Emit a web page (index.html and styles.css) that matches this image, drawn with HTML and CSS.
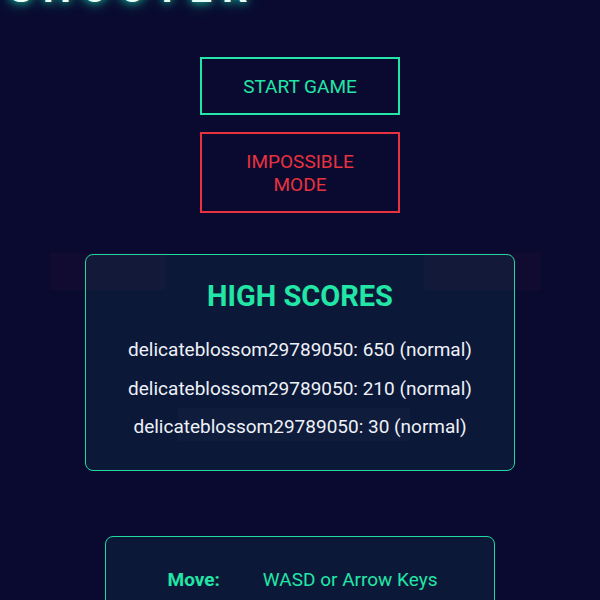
FILE: index.html
```html
<!DOCTYPE html>
<html lang="en">
<head>
<meta charset="utf-8">
<title>Shooter</title>
<link rel="stylesheet" href="styles.css">
</head>
<body>
<div class="fx fx-a"></div>
<div class="fx fx-b"></div>
<div class="fx fx-c"></div>
<main class="menu">
  <h1 class="title">SHOOTER</h1>
  <div class="buttons">
    <button class="btn btn-start">START GAME</button>
    <button class="btn btn-impossible">IMPOSSIBLE<br>MODE</button>
  </div>
  <section class="card scores">
    <h2 class="scores-title">HIGH SCORES</h2>
    <p class="score">delicateblossom29789050: 650 (normal)</p>
    <p class="score">delicateblossom29789050: 210 (normal)</p>
    <p class="score">delicateblossom29789050: 30 (normal)</p>
  </section>
  <section class="card controls">
    <div class="control-row">
      <span class="control-key">Move:</span>
      <span class="control-val">WASD or Arrow Keys</span>
    </div>
  </section>
</main>
</body>
</html>
```

FILE: styles.css
```css
html, body {
  margin: 0;
  padding: 0;
  background: #0a0a30;
  font-family: Roboto, "Noto Sans", "Liberation Sans", sans-serif;
  overflow: hidden;
}

.menu {
  display: flex;
  flex-direction: column;
  align-items: center;
  height: 600px;
}

.title {
  align-self: flex-start;
  margin: -31px 0 0 8px;
  font-size: 40px;
  line-height: 40px;
  font-weight: 700;
  letter-spacing: 10px;
  color: #e8fff8;
  text-shadow: 0 0 8px #19c9a0, 0 0 16px #108f7c;
}

.buttons {
  display: flex;
  flex-direction: column;
  gap: 17px;
  margin-top: 48px;
}

.btn {
  width: 200px;
  padding: 15.5px 10px;
  background: transparent;
  font-family: inherit;
  font-size: 19px;
  line-height: 23px;
  text-align: center;
  cursor: pointer;
}

.btn-start {
  border: 2px solid #22e6a6;
  color: #22e6a6;
}

.btn-impossible {
  border: 2px solid #e8323f;
  color: #e8323f;
}

.card {
  box-sizing: border-box;
  border: 1px solid #22d9a0;
  border-radius: 8px;
  background: #0c1838;
  text-align: center;
}

.scores {
  width: 430px;
  margin-top: 41px;
  padding: 24px 10px 23px;
}

.scores-title {
  margin: 0 0 18px;
  font-size: 29px;
  line-height: 34px;
  font-weight: 700;
  color: #22e6a6;
}

.score {
  margin: 0;
  font-size: 19px;
  line-height: 38.5px;
  color: #eef2f8;
}

.controls {
  width: 390px;
  margin-top: 65px;
  padding: 31px 8px 24px 13px;
}

.control-row {
  display: grid;
  grid-template-columns: auto auto;
  justify-content: center;
  column-gap: 43px;
  font-size: 19px;
  line-height: 24px;
  color: #22e6a6;
}

.control-key {
  font-weight: 700;
}

.fx {
  position: absolute;
  pointer-events: none;
}

.fx-a {
  left: 50px;
  top: 253px;
  width: 116px;
  height: 37px;
  background: rgba(255, 70, 90, 0.03);
}

.fx-b {
  left: 424px;
  top: 253px;
  width: 117px;
  height: 37px;
  background: rgba(255, 70, 90, 0.03);
}

.fx-c {
  left: 178px;
  top: 408px;
  width: 232px;
  height: 33px;
  background: rgba(255, 255, 255, 0.02);
}
```
